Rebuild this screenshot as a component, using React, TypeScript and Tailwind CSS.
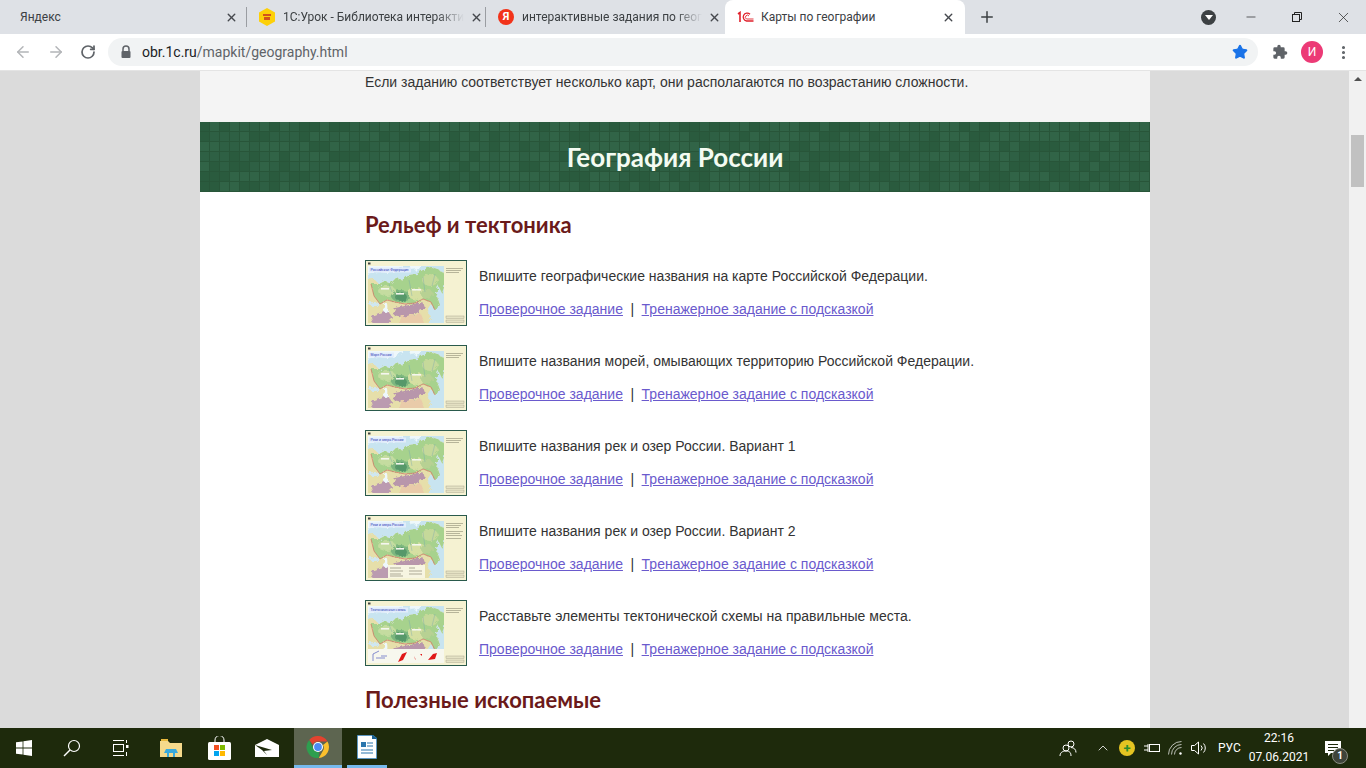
import { ArrowLeft, ArrowRight, RotateCw, X, Plus, Minus, Star, MoreVertical, ChevronUp } from "lucide-react";

const tasks = [
  { text: "Впишите географические названия на карте Российской Федерации.", label: "Российская Федерация", w: 38, legend: 0 },
  { text: "Впишите названия морей, омывающих территорию Российской Федерации.", label: "Моря России", w: 21, legend: 0 },
  { text: "Впишите названия рек и озер России. Вариант 1", label: "Реки и озера России", w: 33, legend: 0 },
  { text: "Впишите названия рек и озер России. Вариант 2", label: "Реки и озера России", w: 33, legend: 1 },
  { text: "Расставьте элементы тектонической схемы на правильные места.", label: "Тектоническая схема", w: 35, legend: 2 },
];

function MapThumb({ label, w, legend }: { label: string; w: number; legend: number }) {
  return (
    <svg width="102" height="66" viewBox="0 0 102 66" className="shrink-0 block">
      <defs>
        <filter id="rough" x="0" y="0" width="100%" height="100%">
          <feTurbulence type="fractalNoise" baseFrequency="0.28" numOctaves="3" seed="4" />
          <feDisplacementMap in="SourceGraphic" scale="5" />
          <feGaussianBlur stdDeviation="0.35" />
        </filter>
        <clipPath id="mapclip">
          <rect x="3" y="6" width="76" height="57" />
        </clipPath>
      </defs>
      <rect x="0.5" y="0.5" width="101" height="65" fill="#f5f2d2" stroke="#2a5a4c" />
      <rect x="3" y="2.5" width="2.5" height="2" fill="#444" />
      <g clipPath="url(#mapclip)">
        <rect x="3" y="6" width="76" height="57" fill="#c8e4f0" />
        <g filter="url(#rough)">
          <path d="M0 3 H40 L34 10 L24 13 L12 12 L0 14 Z M44 6 L56 4 L54 9 L46 10 Z" fill="#eef8fb" />
          {/* вся суша */}
          <path d="M0 20 L9 19 L14 24 L20 21 L26 23 L31 18 L38 20 L44 15 L52 14 L58 10 L66 7 L72 9 L80 14 L80 24 L77 33 L73 25 L71 34 L75 45 L70 50 L66 44 L62 50 L66 58 L60 70 L0 70 Z" fill="#e6dfaa" />
          {/* Россия */}
          <path d="M6 24 L14 24 L20 21 L26 23 L31 18 L38 20 L44 15 L52 14 L58 10 L66 7 L72 9 L80 14 L80 24 L77 33 L73 25 L71 34 L75 45 L70 50 L66 42 L58 39 L50 43 L40 44 L30 42 L22 40 L15 44 L9 36 Z" fill="#a7d28d" />
          <ellipse cx="22" cy="31" rx="9" ry="5" fill="#c4dca0" />
          <ellipse cx="36" cy="36" rx="10" ry="6" fill="#7bb67f" />
          <ellipse cx="36" cy="37" rx="6" ry="4" fill="#57986b" />
          <ellipse cx="52" cy="34" rx="9" ry="6" fill="#d6dfa2" />
          <ellipse cx="65" cy="20" rx="8" ry="6" fill="#c5d99a" />
          <ellipse cx="62" cy="34" rx="6" ry="5" fill="#b7d193" />
          {/* горы и юг */}
          <path d="M30 48 L44 45 L58 42 L60 48 L50 54 L38 57 L28 55 Z" fill="#b896ab" />
          <path d="M6 56 L22 50 L28 58 L20 66 L8 66 Z" fill="#bb9bb0" />
          <path d="M36 57 L56 54 L60 64 L34 66 Z" fill="#e9cba9" />
          <ellipse cx="21" cy="48" rx="2.4" ry="5" fill="#eef8fc" />
          <ellipse cx="9" cy="44" rx="5" ry="2" fill="#cfe7f2" />
        </g>
        <path d="M6 24 L9 36 L15 44 L22 40 L30 42 L40 44 L50 43 L58 39 L66 42 L70 50" fill="none" stroke="#cf6f62" strokeWidth="0.7" />
        <path d="M24 24 L27 32 M44 20 L47 36 M58 17 L60 32 M70 14 L67 26" stroke="#6f9fb5" strokeWidth="0.35" />
        <g fill="#f4f6ee">
          <rect x="16" y="28" width="8" height="1.6" />
          <rect x="31" y="33" width="8" height="1.6" />
          <rect x="47" y="29" width="9" height="1.6" />
        </g>
        {legend === 1 && (
          <g>
            <rect x="23" y="50" width="37" height="13" fill="#f7f5e2" />
            <path d="M25 53 H36 M25 56 H38 M25 59 H36 M25 61 H38 M44 53 H50 M44 56 H57 M44 59 H57" stroke="#8d8b76" strokeWidth="0.7" />
          </g>
        )}
        {legend === 2 && (
          <g>
            <rect x="3" y="49" width="76" height="14" fill="#f7f7ee" />
            <path d="M8 54 L14 51 M8 54 L8 61 M16 56 L22 56 M11 58 H20" stroke="#5560c0" strokeWidth="0.7" />
            <path d="M33 62 L37 54 L42 52 L38 60 Z M49 56 L50 59 L51 60 Z M63 60 L68 54 L72 53 L70 59 Z M55 54 L57 54 L57 56 Z" fill="#e01818" />
          </g>
        )}
      </g>
      <rect x="4" y="7.5" width={w + 4} height="5" fill="#e2ecfb" />
      <text x="5.5" y="11.4" fontSize="3.9" textLength={w} lengthAdjust="spacingAndGlyphs" fill="#1f35b5" fontFamily="Liberation Sans, sans-serif">{label}</text>
      <g fill="#a8a58c">
        <rect x="81" y="8" width="17" height="0.8" />
        <rect x="81" y="10" width="15" height="0.8" />
        <rect x="81" y="12" width="13" height="0.8" />
        {legend === 1 && (
          <>
            <rect x="81" y="16" width="17" height="0.8" />
            <rect x="81" y="18" width="14" height="0.8" />
            <rect x="81" y="20" width="16" height="0.8" />
            <rect x="81" y="23" width="15" height="0.8" />
          </>
        )}
      </g>
      <g fill="#e5e2c4" stroke="#9d9a84" strokeWidth="0.4">
        <rect x="81" y="56" width="18" height="2.4" />
        <rect x="81" y="60" width="18" height="2.4" />
      </g>
    </svg>
  );
}

function Banner() {
  const cells = [];
  for (let r = 0; r < 7; r++) {
    for (let c = 0; c < 95; c++) {
      const n = Math.abs(Math.sin(c * 12.9898 + r * 78.233) * 43758.5453) % 1;
      const fill = n > 0.55 ? "#316447" : n > 0.25 ? "#2e6044" : "#2a5b3e";
      cells.push(<rect key={`${r}-${c}`} x={c * 10} y={r * 10} width="9" height="9" fill={fill} />);
    }
  }
  return (
    <div className="relative h-[70px] flex items-center justify-center bg-[#285539]">
      <svg width="950" height="70" className="absolute inset-0">{cells}</svg>
      <h1 className="relative text-[26px] font-bold text-[#f4fbf2] font-['Lato','Open_Sans',sans-serif]">География России</h1>
    </div>
  );
}

function TabClose({ className = "" }: { className?: string }) {
  return <X size={13} strokeWidth={2.6} className={`text-[#45484d] shrink-0 ${className}`} />;
}

function ChromeLogo() {
  return (
    <svg width="24" height="24" viewBox="0 0 24 24">
      <path d="M12 1a11 11 0 0 1 9.5 5.5H12a5.5 5.5 0 0 0-5 3.2L3.2 4.9A11 11 0 0 1 12 1z" fill="#e2432f" />
      <path d="M21.5 6.5A11 11 0 0 1 12.8 23l4-7a5.5 5.5 0 0 0 .2-6z" fill="#fbc02d" />
      <path d="M3.2 4.9 7.6 14a5.5 5.5 0 0 0 5.4 3l-.2 6A11 11 0 0 1 3.2 4.9z" fill="#2e9e4f" />
      <circle cx="12" cy="12" r="5" fill="#fff" />
      <circle cx="12" cy="12" r="3.9" fill="#4c8bf5" />
    </svg>
  );
}

export default function App() {
  return (
    <div className="h-[768px] w-[1366px] overflow-hidden flex flex-col bg-[#dbdbdb] font-['Liberation_Sans',sans-serif]">
      {/* tab strip */}
      <div className="h-[34px] bg-[#dee1e6] flex items-stretch text-[12px] font-['Roboto',sans-serif] text-[#3c4043] shrink-0">
        <div className="w-[247px] pl-[20px] pr-[8px] flex items-center justify-between border-r border-[#9a9da2] my-[7px]">
          <span>Яндекс</span>
          <TabClose />
        </div>
        <div className="w-[239px] pl-[12px] pr-[8px] flex items-center border-r border-[#9a9da2] my-[7px]">
          <svg width="16" height="18" viewBox="0 0 16 18" className="mr-[8px] shrink-0">
            <path d="M8 0 L16 4.5 V13.5 L8 18 L0 13.5 V4.5 Z" fill="#fdd008" />
            <path d="M4 6H12V8H4ZM5 9H11V12H5Z" fill="#d2541b" />
          </svg>
          <span className="flex-1 whitespace-nowrap mask-r-from-[85%]">1С:Урок - Библиотека интеракти</span>
          <TabClose className="ml-[6px]" />
        </div>
        <div className="w-[239px] pl-[12px] pr-[8px] flex items-center my-[7px]">
          <div className="w-[16px] h-[16px] rounded-full bg-[#f2331a] text-white text-[11px] font-bold flex items-center justify-center mr-[8px] shrink-0">Я</div>
          <span className="flex-1 whitespace-nowrap mask-r-from-[85%]">интерактивные задания по геог</span>
          <TabClose className="ml-[6px]" />
        </div>
        <div className="w-[240px] bg-white rounded-t-[8px] pl-[12px] pr-[10px] flex items-center">
          <svg width="17" height="12" viewBox="0 0 17 12" fill="none" stroke="#e0212b" className="mr-[7px] shrink-0">
            <path d="M1 3 L3 1.5 V11" strokeWidth="1.6" />
            <path d="M13 3.2A4 4 0 1 0 9.5 10H16.5" strokeWidth="1.3" />
            <path d="M12 5A2 2 0 1 0 9.5 8H16.5" strokeWidth="0.9" />
          </svg>
          <span className="flex-1">Карты по географии</span>
          <TabClose />
        </div>
        <div className="w-[44px] flex items-center justify-center">
          <Plus size={18} strokeWidth={2} className="text-[#3c4043]" />
        </div>
        <div className="flex-1 flex items-center justify-end">
          <div className="w-[15px] h-[15px] rounded-full bg-[#3c4043] flex items-center justify-center mr-[12px]">
            <div className="w-0 h-0 border-l-[4px] border-r-[4px] border-t-[5px] border-l-transparent border-r-transparent border-t-white" />
          </div>
          <div className="w-[46px] flex justify-center"><Minus size={14} strokeWidth={1.2} className="text-[#222]" /></div>
          <div className="w-[46px] flex justify-center">
            <svg width="12" height="12" viewBox="0 0 12 12" fill="none" stroke="#222">
              <rect x="1.5" y="3.5" width="7" height="7" />
              <path d="M3.5 3.5V1.5H10.5V8.5H8.5" />
            </svg>
          </div>
          <div className="w-[46px] flex justify-center"><X size={17} strokeWidth={1} className="text-[#222]" /></div>
        </div>
      </div>
      {/* toolbar */}
      <div className="h-[37px] bg-white flex items-center shrink-0 border-b border-[#e4e4e4]">
        <div className="w-[108px] flex items-center pl-[14px] gap-[15px]">
          <ArrowLeft size={18} className="text-[#b3b5b8]" />
          <ArrowRight size={18} className="text-[#b3b5b8]" />
          <RotateCw size={16} strokeWidth={2.6} className="text-[#5f6368]" />
        </div>
        <div className="w-[1150px] h-[28px] rounded-full bg-[#f1f3f4] flex items-center pl-[12px] pr-[10px]">
          <svg width="12" height="14" viewBox="0 0 12 14" className="mr-[10px]">
            <path d="M3 6V4a3 3 0 0 1 6 0v2" fill="none" stroke="#5f6368" strokeWidth="1.5" />
            <rect x="1.5" y="6" width="9" height="7" rx="1" fill="#5f6368" />
          </svg>
          <span className="flex-1 text-[14px] font-['Roboto',sans-serif] text-[#5f6368]"><span className="text-[#202124]">obr.1c.ru</span>/mapkit/geography.html</span>
          <Star size={16} className="text-[#1a73e8] fill-[#1a73e8]" />
        </div>
        <div className="flex-1 flex items-center pl-[14px]">
          <svg width="16" height="16" viewBox="0 0 24 24" fill="#5f6368">
            <path d="M20.5 11H19V7a2 2 0 0 0-2-2h-4V3.5a2.5 2.5 0 0 0-5 0V5H4a2 2 0 0 0-2 2v3.8h1.5a2.7 2.7 0 0 1 0 5.4H2V20a2 2 0 0 0 2 2h3.8v-1.5a2.7 2.7 0 0 1 5.4 0V22H17a2 2 0 0 0 2-2v-4h1.5a2.5 2.5 0 0 0 0-5z" />
          </svg>
          <div className="w-[22px] h-[22px] rounded-full bg-[#ec3a76] text-white text-[12px] flex items-center justify-center ml-[13px] font-['Roboto',sans-serif]">И</div>
          <MoreVertical size={17} strokeWidth={2.4} className="text-[#5f6368] ml-[12px]" />
        </div>
      </div>
      {/* page */}
      <div className="flex-1 min-h-0 flex">
        <div className="ml-[200px] w-[950px] bg-white overflow-hidden">
          <div className="h-[51px] bg-[#f4f4f4] pl-[165px] pt-[1px] text-[14px] leading-[20px] text-[#333]">
            Если заданию соответствует несколько карт, они располагаются по возрастанию сложности.
          </div>
          <Banner />
          <div className="pl-[165px]">
            <h2 className="mt-[18px] mb-[20px] text-[22px] leading-[30px] font-bold text-[#6b1a1a] font-['Lato','Open_Sans',sans-serif]">Рельеф и тектоника</h2>
            {tasks.map((t) => (
              <div key={t.text} className="flex gap-[12px] h-[66px] mb-[19px]">
                <MapThumb label={t.label} w={t.w} legend={t.legend} />
                <div className="text-[14px] leading-[20px] text-[#333] pt-[6px]">
                  <p>{t.text}</p>
                  <p className="mt-[13px]">
                    <a href="#" className="text-[#6a5acd] underline">Проверочное задание</a>
                    <span className="mx-[7.5px] text-[#333]">|</span>
                    <a href="#" className="text-[#6a5acd] underline">Тренажерное задание с подсказкой</a>
                  </p>
                </div>
              </div>
            ))}
            <h2 className="mt-[3px] text-[22px] leading-[30px] font-bold text-[#6b1a1a] font-['Lato','Open_Sans',sans-serif]">Полезные ископаемые</h2>
          </div>
        </div>
        <div className="ml-auto w-[17px] bg-[#f1f1f1] flex flex-col items-center">
          <div className="mt-[6px] w-0 h-0 border-l-[4px] border-r-[4px] border-b-[4px] border-l-transparent border-r-transparent border-b-[#505050]" />
          <div className="mt-[54px] w-[13px] h-[52px] bg-[#c1c1c1]" />
        </div>
      </div>
      {/* taskbar */}
      <div className="h-[40px] bg-[#1e2a0c] flex items-stretch text-white shrink-0 font-['Roboto',sans-serif]">
        <div className="w-[48px] flex items-center justify-center">
          <svg width="16" height="16" viewBox="0 0 16 16" fill="#fff">
            <path d="M0 2.3 6.6 1.4V7.6H0ZM7.4 1.3 16 0V7.6H7.4ZM0 8.4H6.6V14.6L0 13.7ZM7.4 8.4H16V16L7.4 14.7Z" />
          </svg>
        </div>
        <div className="w-[48px] flex items-center justify-center">
          <svg width="18" height="18" viewBox="0 0 18 18" fill="none" stroke="#fff" strokeWidth="1.2">
            <circle cx="11" cy="7" r="5.5" />
            <path d="M7 11 1 17" strokeWidth="1.5" />
          </svg>
        </div>
        <div className="w-[48px] flex items-center justify-center">
          <svg width="17" height="16" viewBox="0 0 17 16" fill="none" stroke="#fff">
            <path d="M1 .5H12M1 15.5H12" />
            <rect x="1.5" y="4.5" width="10" height="7" />
            <path d="M14.5 0V3M14.5 12V16" />
            <rect x="14" y="5" width="2.5" height="3" fill="#fff" stroke="none" />
          </svg>
        </div>
        <div className="w-[48px] flex items-center justify-center ml-[3px]">
          <svg width="22" height="18" viewBox="0 0 22 18">
            <path d="M0 2H8L10 4H22V18H0Z" fill="#f5d98c" />
            <path d="M1 0H8V2H1Z" fill="#e8b93f" />
            <path d="M6 10H16L18 14H15V18H7V14H4Z" fill="#39a9dc" />
            <rect x="9" y="14" width="4" height="4" fill="#f5d98c" />
          </svg>
        </div>
        <div className="w-[48px] flex items-center justify-center">
          <svg width="23" height="24" viewBox="0 0 23 24">
            <path d="M7 6V4a4 4 0 0 1 9 0v2" fill="none" stroke="#fff" />
            <rect x="0" y="6" width="23" height="18" rx="1.5" fill="#fff" />
            <rect x="6" y="9" width="5" height="5" fill="#f25022" />
            <rect x="12" y="9" width="5" height="5" fill="#7fba00" />
            <rect x="6" y="15" width="5" height="5" fill="#00a4ef" />
            <rect x="12" y="15" width="5" height="5" fill="#ffb900" />
          </svg>
        </div>
        <div className="w-[48px] flex items-center justify-center">
          <svg width="24" height="18" viewBox="0 0 24 18">
            <path d="M12 0 24 6V18H0V6Z" fill="#fff" />
            <path d="M0 6 17 11 9 12 12 16 7 11Z" fill="#1e2a0c" />
          </svg>
        </div>
        <div className="w-[48px] ml-[3px] bg-[#5d6550] flex items-center justify-center border-b-[3px] border-[#76b9ed]"><ChromeLogo /></div>
        <div className="w-[40px] ml-[5px] flex items-center justify-center border-b-[3px] border-[#76b9ed]">
          <svg width="20" height="24" viewBox="0 0 20 24">
            <path d="M0 0H15L20 4V24H0Z" fill="#fff" stroke="#2a76ad" strokeWidth="1.5" />
            <path d="M15 0 20 4H15Z" fill="#1a5f90" />
            <rect x="4" y="7" width="5" height="5" fill="#2a76ad" />
            <path d="M10 8H16M10 11H16M4 15H16M4 18H16" stroke="#2a76ad" strokeWidth="1.2" />
          </svg>
        </div>
        <div className="flex-1 flex items-center justify-end pr-[18px]">
          <svg width="18" height="18" viewBox="0 0 18 18" fill="none" stroke="#fff" strokeWidth="1" className="mr-[18px]">
            <circle cx="7" cy="9" r="3" />
            <circle cx="12" cy="5" r="3" />
            <path d="M1 17c0-3 2-5 6-5s5 2 5 5M12 8.5c3 0 5 2 5 5" />
          </svg>
          <ChevronUp size={16} strokeWidth={1.2} className="mr-[8px]" />
          <div className="w-[16px] h-[16px] rounded-full bg-[#e5c422] flex items-center justify-center text-[#2c8c2c] text-[13px] font-bold leading-none mr-[9px]">+</div>
          <svg width="16" height="12" viewBox="0 0 16 12" fill="none" stroke="#fff" className="mr-[8px]">
            <rect x="5.5" y="2.5" width="10" height="7" />
            <path d="M0 4H4M0 8H4M4 2V10" />
          </svg>
          <svg width="15" height="14" viewBox="0 0 15 14" fill="none" stroke="#fff" className="mr-[8px]">
            <path d="M.5 13.5A13 13 0 0 1 13.5.5M3.5 13.5A10 10 0 0 1 13.5 3.5M6.5 13.5A7 7 0 0 1 13.5 6.5" opacity=".7" />
            <circle cx="12.5" cy="12.5" r="1.2" fill="#fff" stroke="none" />
          </svg>
          <svg width="16" height="14" viewBox="0 0 16 14" fill="none" stroke="#fff" className="mr-[11px]">
            <path d="M.5 4.5H3.5L7.5 1V13L3.5 9.5H.5Z" />
            <path d="M10 4.5a3.5 3.5 0 0 1 0 5M12.5 2.5a6.5 6.5 0 0 1 0 9" />
          </svg>
          <span className="text-[12px] w-[22px] whitespace-nowrap">РУС</span>
          <div className="w-[78px] text-center text-[12px] leading-[19px]">
            <div>22:16</div>
            <div>07.06.2021</div>
          </div>
          <div className="w-[30px] relative flex items-center justify-center">
            <svg width="16" height="15" viewBox="0 0 16 15">
              <path d="M0 0H16V12H6L3 15V12H0Z" fill="#fff" />
              <path d="M3 3.5H13M3 6.5H13M3 9.5H9" stroke="#1e2a0c" />
            </svg>
            <div className="absolute left-[14px] top-[7px] w-[16px] h-[16px] rounded-full bg-[#3f443a] border border-[#8a8d82] text-[10px] font-bold flex items-center justify-center">1</div>
          </div>
        </div>
      </div>
    </div>
  );
}
